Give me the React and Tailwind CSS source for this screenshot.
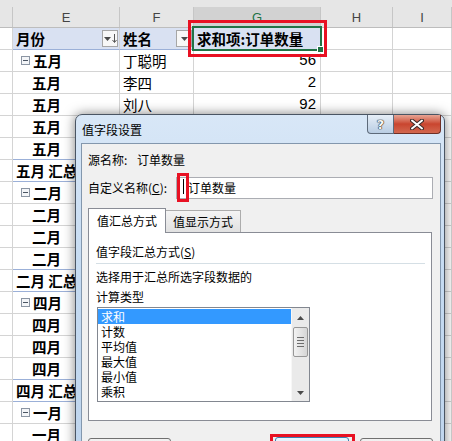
import React from 'react'

const rows = [
  { e: '五月', f: '丁聪明', g: '56', exp: true },
  { e: '五月', f: '李四', g: '2' },
  { e: '五月', f: '刘八', g: '92' },
  { e: '五月', f: '王五', g: '35' },
  { e: '五月', f: '赵六', g: '18', line: true },
  { e: '五月 汇总', g: '203', total: true, line: true },
  { e: '二月', f: '丁聪明', g: '12', exp: true },
  { e: '二月', f: '李四', g: '47' },
  { e: '二月', f: '刘八', g: '23' },
  { e: '二月', f: '王五', g: '66', line: true },
  { e: '二月 汇总', g: '148', total: true, line: true },
  { e: '四月', f: '丁聪明', g: '31', exp: true },
  { e: '四月', f: '李四', g: '9' },
  { e: '四月', f: '刘八', g: '54' },
  { e: '四月', f: '赵六', g: '70', line: true },
  { e: '四月 汇总', g: '164', total: true, line: true },
  { e: '一月', f: '丁聪明', g: '25', exp: true },
  { e: '一月', f: '李四', g: '40' },
]

const items = ['求和', '计数', '平均值', '最大值', '最小值', '乘积']

function Expander() {
  return (
    <span className="w-[9px] h-[9px] mr-[3px] border border-[#8b95a3] bg-[#f3f5f8] flex items-center justify-center">
      <span className="w-[5px] h-px bg-[#4a5563]" />
    </span>
  )
}

function Row({ e, f, g, exp, total, line }) {
  const b = line ? 'border-b-[#9bb0d8]' : 'border-b-[#d4d4d4]'
  const pad = total ? 'pl-[3px]' : exp ? 'pl-[8px]' : 'pl-[19px]'
  return (
    <div className="flex h-[22px]">
      <div className="w-[13px] shrink-0 border-r border-b border-[#d4d4d4]" />
      <div className={`w-[107px] shrink-0 border-r border-r-[#d4d4d4] border-b ${b} flex items-center font-bold whitespace-nowrap ${pad}`}>
        {exp && <Expander />}
        {e}
      </div>
      <div className={`w-[74px] shrink-0 border-r border-r-[#d4d4d4] border-b ${b} flex items-center pl-[3px] whitespace-nowrap ${total ? 'font-bold' : ''}`}>
        {f}
      </div>
      <div className={`w-[127px] shrink-0 border-r border-r-[#d4d4d4] border-b ${b} flex items-center justify-end pr-[4px] font-['Liberation_Sans',sans-serif] text-[15px] ${total ? 'font-bold' : ''}`}>
        {g}
      </div>
      <div className="w-[72px] shrink-0 border-r border-b border-[#d4d4d4]" />
      <div className="w-[59px] shrink-0 border-r border-b border-[#d4d4d4]" />
    </div>
  )
}

function Triangle({ up }) {
  return (
    <svg width="7" height="4" viewBox="0 0 7 4">
      <path d={up ? 'M0 4 L3.5 0 L7 4 Z' : 'M0 0 L3.5 4 L7 0 Z'} fill="#4a4a4a" />
    </svg>
  )
}

function Dialog() {
  return (
    <div className="absolute left-[75px] top-[114px] w-[370px] h-[340px] flex flex-col rounded-t-[7px] border border-[#4a5563] bg-linear-to-b from-[#d8e7f7] via-[#c4daf1] to-[#bfd5ed] shadow-[0_0_12px_rgba(0,0,0,0.5)] text-[12px] leading-[16px] text-black">
      <div className="h-[28px] shrink-0 flex items-start pl-[6px] pr-[3px]">
        <span className="mt-[7px]">值字段设置</span>
        <div className="ml-auto flex">
          <div className="w-[27px] h-[19px] border border-[#5d6a7a] border-t-0 rounded-bl-[4px] bg-linear-to-b from-[#e6eef7] to-[#b9cde3] flex items-center justify-center">
            <span className="font-['DejaVu_Sans',sans-serif] font-bold text-[13px] leading-none text-[#f8f8f8] [text-shadow:0_0_1px_#222,0_0_1px_#222,0_0_1px_#222]">?</span>
          </div>
          <div className="w-[47px] h-[19px] border border-[#6e2f26] border-t-0 border-l-0 rounded-br-[4px] bg-linear-to-b from-[#e6a494] via-[#c9452f] to-[#d2674f] flex items-center justify-center">
            <svg width="14" height="11" viewBox="0 0 14 11">
              <path d="M2 1.5 L12 9.5 M12 1.5 L2 9.5" stroke="#3a2a28" strokeWidth="4" strokeLinecap="round" />
              <path d="M2 1.5 L12 9.5 M12 1.5 L2 9.5" stroke="#ffffff" strokeWidth="2" strokeLinecap="round" />
            </svg>
          </div>
        </div>
      </div>

      <div className="flex-1 ml-[5px] mr-[3px] border border-[#8397ad] bg-[#f0f0f0] pl-[6px] pr-[7px]">
        <div className="mt-[8px] flex">
          <span className="w-[49px]">源名称:</span>
          <span>订单数量</span>
        </div>

        <div className="mt-[9px] flex items-center h-[22px]">
          <span className="w-[88px] shrink-0">自定义名称(<span className="underline">C</span>):</span>
          <div className="relative flex-1 h-[22px] border border-[#abadb3] bg-white flex items-center pl-[11px]">
            订单数量
            <div className="absolute left-0 top-[-5px] w-[12px] h-[29px] border-[3px] border-[#e81123] flex justify-center">
              <span className="w-px h-[15px] mt-[3px] bg-black" />
            </div>
          </div>
        </div>

        <div className="mt-[9px] flex items-end">
          <div className="relative z-10 -mb-px w-[78px] h-[25px] border border-[#898c95] border-b-0 bg-white flex items-center justify-center">
            值汇总方式
          </div>
          <div className="w-[75px] h-[22px] border border-[#acacac] border-l-0 border-b-0 bg-linear-to-b from-[#f4f4f4] to-[#e1e1e1] flex items-center justify-center">
            值显示方式
          </div>
        </div>

        <div className="h-[189px] mr-[1px] border border-[#898c95] bg-white pl-[7px] pt-[11px] flex flex-col">
          <span>值字段汇总方式(<span className="underline">S</span>)</span>
          <div className="mt-[3px] h-px mr-[6px] bg-[#d5dfe5]" />
          <span className="mt-[5px]">选择用于汇总所选字段数据的</span>
          <span className="mt-[4px]">计算类型</span>
          <div className="mt-[2px] ml-px w-[213px] h-[95px] border border-[#828790] bg-white flex">
            <div className="flex-1 pt-px flex flex-col">
              {items.map((it, i) => (
                <div key={it} className={`h-[15px] leading-[15px] pl-[3px] ${i === 0 ? 'bg-[#3399ff] text-white' : ''}`}>
                  {it}
                </div>
              ))}
            </div>
            <div className="w-[18px] shrink-0 bg-[#eaeaea] border-l border-l-[#f7f7f7] flex flex-col items-center">
              <div className="h-[17px] flex items-center justify-center pt-[2px]"><Triangle up /></div>
              <div className="mt-[2px] w-[15px] h-[30px] border border-[#979797] rounded-[2px] bg-linear-to-r from-[#f2f2f2] to-[#d6d6d6] flex flex-col items-center justify-center gap-[2px]">
                <span className="w-[7px] h-px bg-[#6c6c6c]" />
                <span className="w-[7px] h-px bg-[#6c6c6c]" />
                <span className="w-[7px] h-px bg-[#6c6c6c]" />
                <span className="w-[7px] h-px bg-[#6c6c6c]" />
              </div>
              <div className="flex-1" />
              <div className="h-[17px] flex items-center justify-center"><Triangle /></div>
            </div>
          </div>
        </div>

        <div className="mt-[13px] flex items-start">
          <div className="mt-[4px] w-[83px] h-[23px] border border-[#707070] rounded-[3px] bg-linear-to-b from-[#f2f2f2] to-[#dddddd]" />
          <div className="ml-[99px] w-[85px] h-[30px] border-[3px] border-[#e81123] pl-[2px]">
            <div className="w-[74px] h-[23px] border border-[#3c7fb1] rounded-[3px] bg-linear-to-b from-[#eaf6fd] to-[#bee6fd]" />
          </div>
          <div className="ml-[5px] mt-[4px] w-[73px] h-[23px] border border-[#707070] rounded-[3px] bg-linear-to-b from-[#f2f2f2] to-[#dddddd]" />
        </div>
      </div>
    </div>
  )
}

export default function App() {
  return (
    <div className="relative w-[452px] h-[441px] overflow-hidden bg-white font-['Noto_Sans_CJK_SC','Noto_Sans',sans-serif] text-black">
      {/* column headers */}
      <div className="flex items-end h-[28px] bg-[#e6e6e6] border-b border-[#bdbdbd] font-['Liberation_Sans',sans-serif] text-[13px] text-[#444]">
        <div className="w-[13px] h-[20px] shrink-0 border-r border-[#c6c6c6]" />
        <div className="w-[107px] h-[20px] shrink-0 border-r border-[#c6c6c6] flex items-center justify-center pt-[2px]">E</div>
        <div className="w-[74px] h-[20px] shrink-0 border-r border-[#c6c6c6] flex items-center justify-center pt-[2px]">F</div>
        <div className="w-[127px] h-[20px] shrink-0 border-r border-[#c6c6c6] bg-[#d2d2d2] text-[#217346] flex items-center justify-center pt-[2px]">G</div>
        <div className="w-[72px] h-[20px] shrink-0 border-r border-[#c6c6c6] flex items-center justify-center pt-[2px]">H</div>
        <div className="w-[59px] h-[20px] shrink-0 border-r border-[#c6c6c6] flex items-center justify-center pt-[2px]">I</div>
      </div>

      <div className="text-[14.5px]">
        {/* pivot header row */}
        <div className="flex h-[22px] font-bold">
          <div className="w-[13px] shrink-0 border-r border-b border-[#d4d4d4]" />
          <div className="w-[107px] shrink-0 border-r border-r-[#d4d4d4] border-b border-b-[#9bb0d8] bg-[#d9e1f2] flex items-center pl-[3px]">
            月份
            <div className="ml-auto mr-px w-[16px] h-[17px] border border-[#a6a6a6] bg-[#f7f7f7] flex items-center justify-center gap-[1px]">
              <Triangle />
              <svg width="5" height="9" viewBox="0 0 5 9"><path d="M2.5 0 V8 M0.5 6 L2.5 8.5 L4.5 6" stroke="#555" strokeWidth="1" fill="none" /></svg>
            </div>
          </div>
          <div className="w-[74px] shrink-0 border-r border-r-[#d4d4d4] border-b border-b-[#9bb0d8] bg-[#d9e1f2] flex items-center pl-[3px]">
            姓名
            <div className="ml-auto mr-px w-[16px] h-[17px] border border-[#a6a6a6] bg-[#f7f7f7] flex items-center justify-center">
              <Triangle />
            </div>
          </div>
          <div className="w-[127px] shrink-0 border-r border-r-[#d4d4d4] border-b border-b-[#9bb0d8] bg-[#d9e1f2] flex items-center pl-[3px] whitespace-nowrap">
            求和项:订单数量
          </div>
          <div className="w-[72px] shrink-0 border-r border-b border-[#d4d4d4]" />
          <div className="w-[59px] shrink-0 border-r border-b border-[#d4d4d4]" />
        </div>

        {rows.map((r, i) => (
          <Row key={i} {...r} />
        ))}
      </div>

      {/* active cell selection */}
      <div className="absolute left-[192px] top-[26px] w-[130px] h-[25px] border-2 border-[#217346]" />
      <div className="absolute left-[317px] top-[46px] w-[7px] h-[7px] bg-[#217346] border border-white" />
      {/* red annotation box */}
      <div className="absolute left-[188px] top-[20px] w-[139px] h-[37px] border-[3px] border-[#e81123]" />

      <Dialog />
    </div>
  )
}
